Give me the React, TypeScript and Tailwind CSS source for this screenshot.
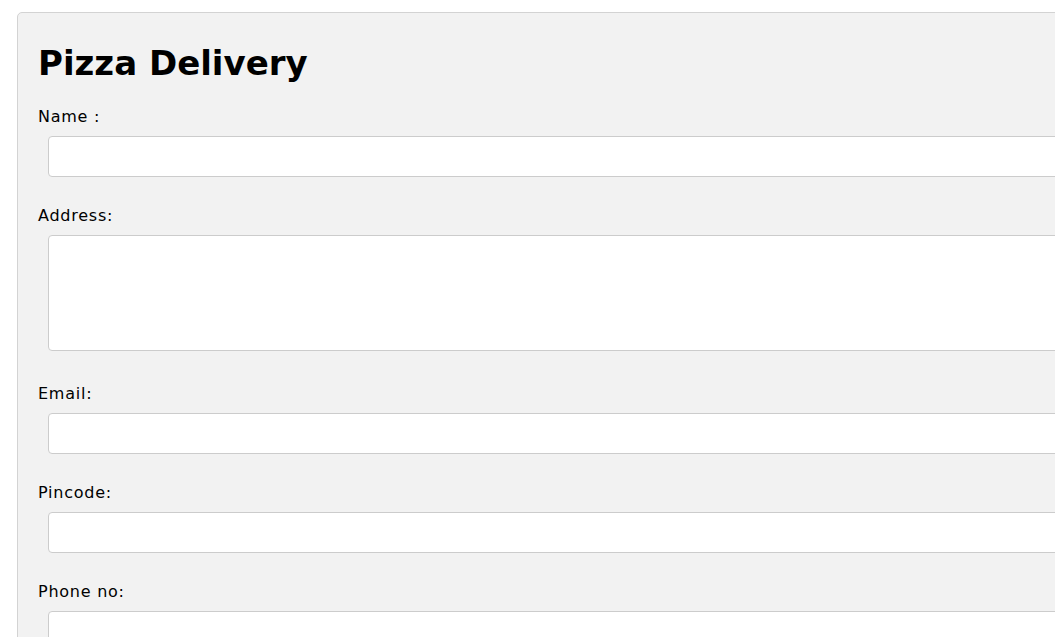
export default function App() {
  return (
    <div className="h-screen w-screen overflow-hidden bg-white text-black font-['DejaVu_Sans',Verdana,sans-serif]">
      <div className="ml-[17px] mt-[12px] w-[1200px] rounded-[5px] border border-[#d3d3d3] bg-[#f2f2f2] px-[20px] pb-[40px] pt-[30px]">
        <h1 className="text-[34px] font-bold leading-[40px]">Pizza Delivery</h1>

        <form className="mt-[22px]">
          <label className="block text-[16px] leading-[24px] tracking-[0.75px]">Name :</label>
          <input
            type="text"
            className="ml-[10px] mt-[7px] block h-[41px] w-[1100px] rounded-[4px] border border-[#cccccc] bg-white px-3"
          />

          <label className="mt-[27px] block text-[16px] leading-[24px] tracking-[0.75px]">Address:</label>
          <textarea className="ml-[10px] mt-[7px] block h-[116px] w-[1100px] resize-none rounded-[4px] border border-[#cccccc] bg-white px-3" />

          <label className="mt-[31px] block text-[16px] leading-[24px] tracking-[0.75px]">Email:</label>
          <input
            type="email"
            className="ml-[10px] mt-[7px] block h-[41px] w-[1100px] rounded-[4px] border border-[#cccccc] bg-white px-3"
          />

          <label className="mt-[27px] block text-[16px] leading-[24px] tracking-[0.75px]">Pincode:</label>
          <input
            type="text"
            className="ml-[10px] mt-[7px] block h-[41px] w-[1100px] rounded-[4px] border border-[#cccccc] bg-white px-3"
          />

          <label className="mt-[27px] block text-[16px] leading-[24px] tracking-[0.75px]">Phone no:</label>
          <input
            type="tel"
            className="ml-[10px] mt-[7px] block h-[41px] w-[1100px] rounded-[4px] border border-[#cccccc] bg-white px-3"
          />
        </form>
      </div>
    </div>
  )
}
